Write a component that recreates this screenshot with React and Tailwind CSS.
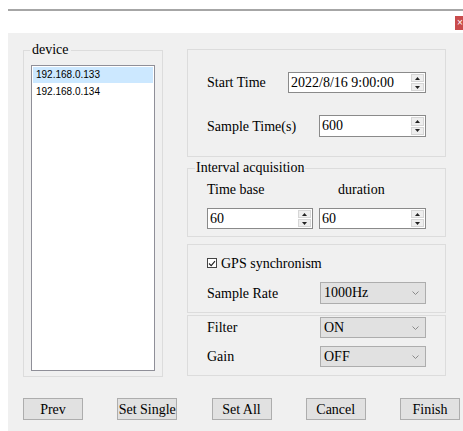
import React from 'react';

const serif = "font-['Liberation_Serif','Times_New_Roman',serif]";

function Arrow({ up }) {
  return (
    <svg width="5" height="3" viewBox="0 0 5 3">
      <path d={up ? 'M0 3 L2.5 0 L5 3 Z' : 'M0 0 L2.5 3 L5 0 Z'} fill="#222" />
    </svg>
  );
}

function SpinBox({ value, w, h }) {
  return (
    <div className={`${w} ${h} flex border border-[#8a8a8a] bg-white`}>
      <div className="flex-1 pl-[2px] text-[14px] leading-[19px] text-black">{value}</div>
      <div className="w-[15px] flex flex-col gap-[1px] p-[1px]">
        <div className="flex-1 flex items-center justify-center bg-[#eeeeee] border border-[#d6d6d6]">
          <Arrow up />
        </div>
        <div className="flex-1 flex items-center justify-center bg-[#eeeeee] border border-[#d6d6d6]">
          <Arrow />
        </div>
      </div>
    </div>
  );
}

function Combo({ value, h = 'h-[21px]' }) {
  return (
    <div className={`w-[106px] ${h} flex items-center justify-between border border-[#adadad] bg-[#e1e1e1] pl-[3px] pr-[6px]`}>
      <span className="text-[14px] leading-[16px] text-black">{value}</span>
      <svg width="7" height="4" viewBox="0 0 7 4">
        <path d="M0.5 0.5 L3.5 3.5 L6.5 0.5" fill="none" stroke="#8a8a8a" strokeWidth="1" />
      </svg>
    </div>
  );
}

function Btn({ children }) {
  return (
    <div className="w-[60px] h-[22px] flex items-center justify-center border border-[#adadad] bg-[#e1e1e1] text-[14px] text-black">
      {children}
    </div>
  );
}

export default function App() {
  return (
    <div className={`relative w-[463px] h-[431px] bg-white overflow-hidden text-black ${serif}`}>
      {/* title strip */}
      <div className="h-[33px] pt-[9px] pl-[8px]">
        <div className="h-[2px] bg-[#a6a6a6]" />
      </div>
      <div className="absolute right-0 top-[16px] w-[8px] h-[14px] bg-[#c94b4c] overflow-hidden">
        <span className="block pl-[2px] text-[10px] leading-[14px] text-white font-['Liberation_Sans',sans-serif]">×</span>
      </div>

      <div className="ml-[8px] h-[398px] bg-[#f0f0f0] pl-[15px] pr-[3px] pt-[9px] flex flex-col">
        <div className="flex items-start gap-[24px]">
          {/* device list */}
          <fieldset className="w-[140px] border border-[#dcdcdc] px-[7px] pt-[7px] pb-[5px]">
            <legend className="-ml-[1px] px-[2px] text-[14px] leading-[16px]">device</legend>
            <div className="h-[306px] bg-white border border-[#8f8f98] p-[1px] font-['Liberation_Sans',sans-serif] text-[10px]">
              <div className="h-[16px] leading-[16px] pl-[3px] bg-[#cce8ff]">192.168.0.133</div>
              <div className="h-[17px] leading-[17px] pl-[3px]">192.168.0.134</div>
            </div>
          </fieldset>

          <div className="w-[259px] mt-[7px] flex flex-col">
            {/* times */}
            <div className="h-[108px] border border-[#dcdcdc] pl-[19px] pt-[22px] flex flex-col gap-[22px]">
              <div className="flex items-center">
                <span className="w-[81px] text-[14px]">Start Time</span>
                <SpinBox value="2022/8/16 9:00:00" w="w-[138px]" h="h-[21px]" />
              </div>
              <div className="flex items-center">
                <span className="w-[112px] text-[14px]">Sample Time(s)</span>
                <SpinBox value="600" w="w-[107px]" h="h-[22px]" />
              </div>
            </div>

            {/* interval acquisition */}
            <fieldset className="mt-[3px] border border-[#dcdcdc] px-0">
              <legend className="ml-[7px] px-[1px] text-[14px] leading-[16px]">Interval acquisition</legend>
              <div className="pl-[19px] pt-[5px] pb-[7px]">
                <div className="flex h-[16px] items-center text-[14px]">
                  <span className="w-[131px]">Time base</span>
                  <span>duration</span>
                </div>
                <div className="mt-[11px] flex gap-[6px]">
                  <SpinBox value="60" w="w-[106px]" h="h-[21px]" />
                  <SpinBox value="60" w="w-[107px]" h="h-[21px]" />
                </div>
              </div>
            </fieldset>

            {/* gps */}
            <div className="mt-[7px] border border-[#dcdcdc] pl-[19px] pt-[10px] pb-[8px]">
              <div className="flex h-[16px] items-center gap-[4px] text-[14px]">
                <div className="w-[10px] h-[10px] border border-[#444] bg-white flex items-center justify-center">
                  <svg width="8" height="7" viewBox="0 0 8 7">
                    <path d="M1 3.5 L3.2 5.7 L7 1.2" fill="none" stroke="#222" strokeWidth="1.1" />
                  </svg>
                </div>
                <span>GPS synchronism</span>
              </div>
              <div className="mt-[11px] flex items-center">
                <span className="w-[113px] text-[14px]">Sample Rate</span>
                <Combo value="1000Hz" h="h-[22px]" />
              </div>
            </div>

            {/* filter / gain */}
            <div className="mt-[2px] border border-[#dcdcdc] pl-[19px] pt-[1px] pb-[8px] flex flex-col gap-[8px]">
              <div className="flex items-center">
                <span className="w-[113px] text-[14px]">Filter</span>
                <Combo value="ON" />
              </div>
              <div className="flex items-center">
                <span className="w-[113px] text-[14px]">Gain</span>
                <Combo value="OFF" />
              </div>
            </div>
          </div>
        </div>

        <div className="mt-[21px] flex justify-between">
          <Btn>Prev</Btn>
          <Btn>Set Single</Btn>
          <Btn>Set All</Btn>
          <Btn>Cancel</Btn>
          <Btn>Finish</Btn>
        </div>
      </div>
    </div>
  );
}
